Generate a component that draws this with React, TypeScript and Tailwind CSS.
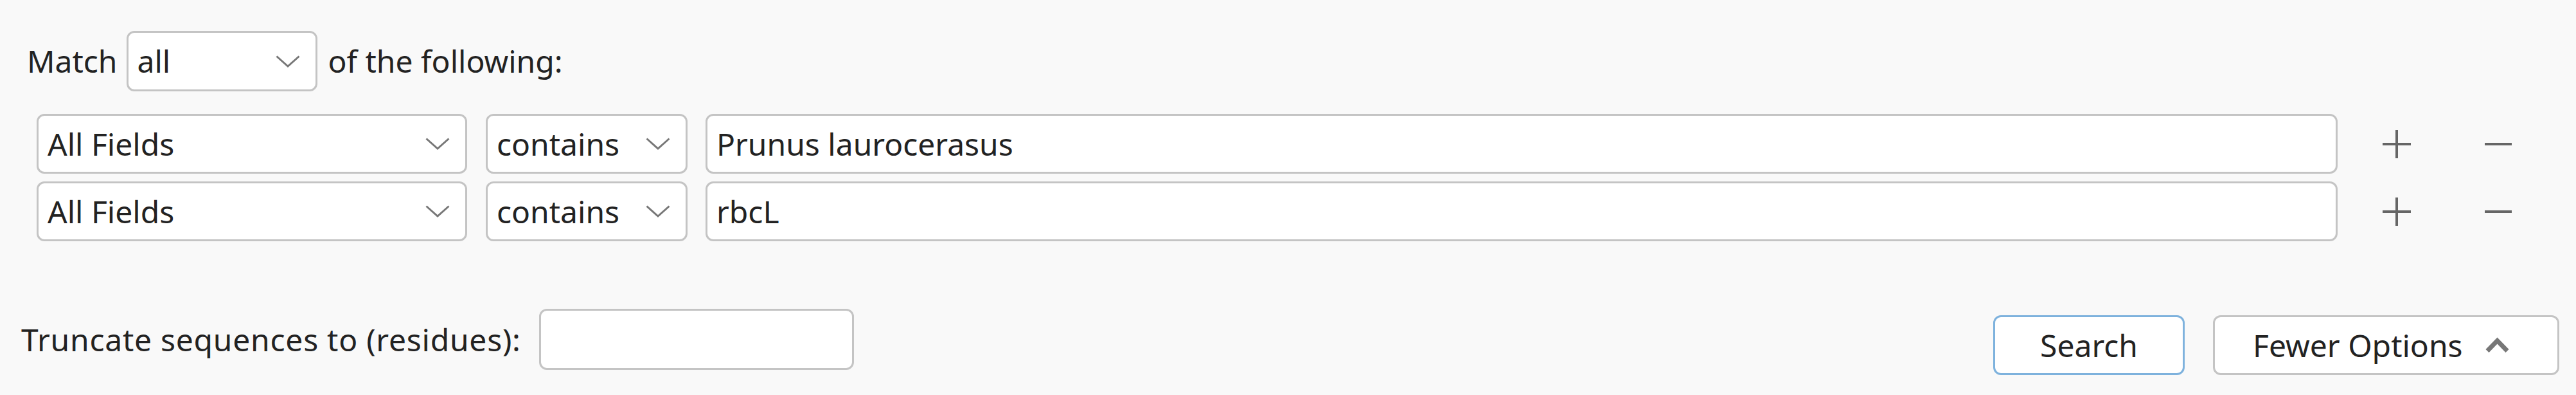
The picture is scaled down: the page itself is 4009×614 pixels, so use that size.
import React from 'react';

function Chevron() {
  return (
    <svg width="38" height="19" viewBox="0 0 38 19" className="shrink-0">
      <polyline points="1.5,1.5 19,17 36.5,1.5" fill="none" stroke="#777" strokeWidth="3" />
    </svg>
  );
}

function SelectBox({ value, className }: { value: string; className: string }) {
  return (
    <div
      className={`flex h-[93px] items-center justify-between rounded-[12px] border-[3px] border-[#c4c4c4] bg-white pl-[14px] pr-[24px] ${className}`}
    >
      <span>{value}</span>
      <Chevron />
    </div>
  );
}

function CriteriaRow({ text }: { text: string }) {
  return (
    <div className="flex items-center">
      <SelectBox value="All Fields" className="w-[670px]" />
      <SelectBox value="contains" className="ml-[29px] w-[314px]" />
      <input
        readOnly
        value={text}
        className="ml-[28px] h-[93px] w-[2540px] rounded-[12px] border-[3px] border-[#c4c4c4] bg-white pl-[14px] text-[#222] outline-none"
      />
      {/* add / remove row */}
      <button className="ml-[70px] flex h-[44px] w-[44px] items-center justify-center" aria-label="Add">
        <svg width="44" height="44" viewBox="0 0 44 44">
          <path d="M22 0V44M0 22H44" stroke="#666" strokeWidth="4" />
        </svg>
      </button>
      <button className="ml-[115px] flex h-[44px] w-[42px] items-center justify-center" aria-label="Remove">
        <svg width="42" height="44" viewBox="0 0 42 44">
          <path d="M0 22H42" stroke="#666" strokeWidth="4" />
        </svg>
      </button>
    </div>
  );
}

export default function App() {
  return (
    <div className="h-[614px] w-full overflow-hidden bg-[#f9f9f9] pt-[48px] font-['Noto_Sans',sans-serif] text-[48px] text-[#222]">
      {/* Match line */}
      <div className="flex h-[94px] items-center pl-[42px]">
        <span>Match</span>
        <SelectBox value="all" className="ml-[14px] h-[94px] w-[297px]" />
        <span className="ml-[17px]">of the following:</span>
      </div>

      {/* Criteria rows */}
      <div className="mt-[35px] flex flex-col gap-[12px] pl-[57px]">
        <CriteriaRow text="Prunus laurocerasus" />
        <CriteriaRow text="rbcL" />
      </div>

      {/* Footer */}
      <div className="mt-[105px] flex items-start pl-[33px] pr-[26px]">
        <div className="flex h-[95px] items-center">
          <span className="tracking-[0.75px]">Truncate sequences to (residues):</span>
          <input
            readOnly
            value=""
            className="ml-[28px] h-[95px] w-[490px] rounded-[12px] border-[3px] border-[#c4c4c4] bg-white outline-none"
          />
        </div>
        <div className="ml-auto mt-[10px] flex gap-[44px]">
          <button className="h-[93px] w-[298px] rounded-[12px] border-[3px] border-[#7eb2dd] bg-white text-[#222]">
            Search
          </button>
          <button className="flex h-[93px] w-[539px] items-center gap-[34px] rounded-[12px] border-[3px] border-[#c4c4c4] bg-white pl-[59px] text-[#222]">
            <span>Fewer Options</span>
            <svg width="39" height="25" viewBox="0 0 39 25">
              <polyline points="4,21.5 19.5,5.5 35,21.5" fill="none" stroke="#777" strokeWidth="7" />
            </svg>
          </button>
        </div>
      </div>
    </div>
  );
}
